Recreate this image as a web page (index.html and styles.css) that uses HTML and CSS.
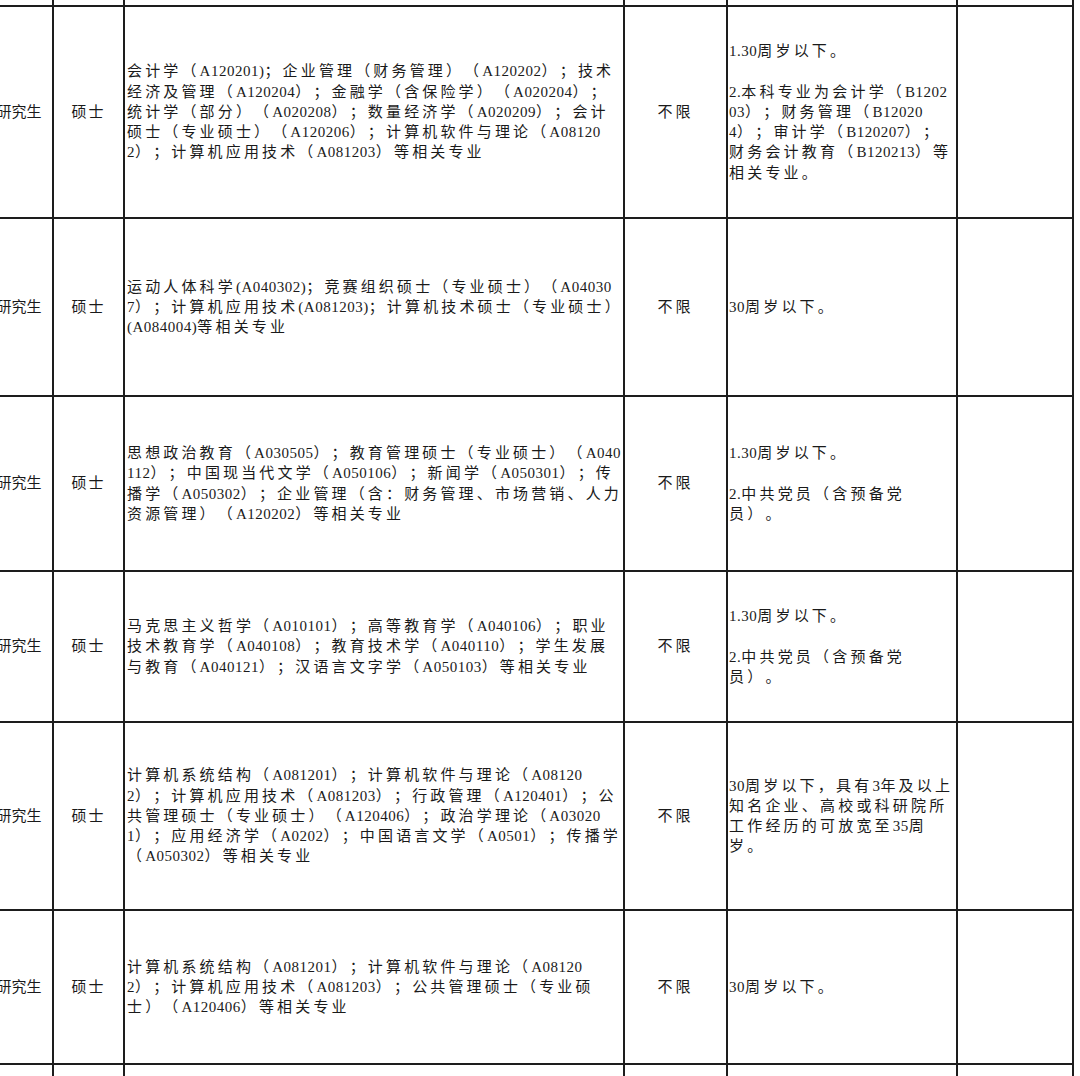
FILE: index.html
```html
<!DOCTYPE html>
<html lang="zh-CN">
<head>
<meta charset="utf-8">
<title>岗位表</title>
<link rel="stylesheet" href="styles.css">
</head>
<body>
<div class="sheet">
  <div class="grid">
    <div class="cell"></div><div class="cell"></div><div class="cell"></div><div class="cell"></div><div class="cell"></div><div class="cell"></div>

    <div class="cell c-edu">研究生</div>
    <div class="cell c-deg">硕士</div>
    <div class="cell c-major"><div>会计学（<span class="en">A120201)</span>；企业管理（财务管理）（<span class="en">A120202</span>）；技术<br>经济及管理（<span class="en">A120204</span>）；金融学（含保险学）（<span class="en">A020204</span>）；<br>统计学（部分）（<span class="en">A020208</span>）；数量经济学（<span class="en">A020209</span>）；会计<br>硕士（专业硕士）（<span class="en">A120206</span>）；计算机软件与理论（<span class="en">A08120</span><br><span class="en">2</span>）；计算机应用技术（<span class="en">A081203</span>）等相关专业</div></div>
    <div class="cell c-lim">不限</div>
    <div class="cell c-note"><div><p><span class="en">1.30</span>周岁以下。</p><p><span class="en">2.</span>本科专业为会计学（<span class="en">B1202</span><br><span class="en">03</span>）；财务管理（<span class="en">B12020</span><br><span class="en">4</span>）；审计学（<span class="en">B120207</span>）；<br>财务会计教育（<span class="en">B120213</span>）等<br>相关专业。</p></div></div>
    <div class="cell"></div>

    <div class="cell c-edu">研究生</div>
    <div class="cell c-deg">硕士</div>
    <div class="cell c-major"><div>运动人体科学<span class="en">(A040302)</span>；竞赛组织硕士（专业硕士）（<span class="en">A04030</span><br><span class="en">7</span>）；计算机应用技术<span class="en">(A081203)</span>；计算机技术硕士（专业硕士）<br><span class="en">(A084004)</span>等相关专业</div></div>
    <div class="cell c-lim">不限</div>
    <div class="cell c-note"><div><p><span class="en">30</span>周岁以下。</p></div></div>
    <div class="cell"></div>

    <div class="cell c-edu">研究生</div>
    <div class="cell c-deg">硕士</div>
    <div class="cell c-major"><div>思想政治教育（<span class="en">A030505</span>）；教育管理硕士（专业硕士）（<span class="en">A040</span><br><span class="en">112</span>）；中国现当代文学（<span class="en">A050106</span>）；新闻学（<span class="en">A050301</span>）；传<br>播学（<span class="en">A050302</span>）；企业管理（含：财务管理、市场营销、人力<br>资源管理）（<span class="en">A120202</span>）等相关专业</div></div>
    <div class="cell c-lim">不限</div>
    <div class="cell c-note"><div><p><span class="en">1.30</span>周岁以下。</p><p><span class="en">2.</span>中共党员（含预备党<br>员）。</p></div></div>
    <div class="cell"></div>

    <div class="cell c-edu">研究生</div>
    <div class="cell c-deg">硕士</div>
    <div class="cell c-major"><div>马克思主义哲学（<span class="en">A010101</span>）；高等教育学（<span class="en">A040106</span>）；职业<br>技术教育学（<span class="en">A040108</span>）；教育技术学（<span class="en">A040110</span>）；学生发展<br>与教育（<span class="en">A040121</span>）；汉语言文字学（<span class="en">A050103</span>）等相关专业</div></div>
    <div class="cell c-lim">不限</div>
    <div class="cell c-note"><div><p><span class="en">1.30</span>周岁以下。</p><p><span class="en">2.</span>中共党员（含预备党<br>员）。</p></div></div>
    <div class="cell"></div>

    <div class="cell c-edu">研究生</div>
    <div class="cell c-deg">硕士</div>
    <div class="cell c-major"><div>计算机系统结构（<span class="en">A081201</span>）；计算机软件与理论（<span class="en">A08120</span><br><span class="en">2</span>）；计算机应用技术（<span class="en">A081203</span>）；行政管理（<span class="en">A120401</span>）；公<br>共管理硕士（专业硕士）（<span class="en">A120406</span>）；政治学理论（<span class="en">A03020</span><br><span class="en">1</span>）；应用经济学（<span class="en">A0202</span>）；中国语言文学（<span class="en">A0501</span>）；传播学<br>（<span class="en">A050302</span>）等相关专业</div></div>
    <div class="cell c-lim">不限</div>
    <div class="cell c-note"><div><p><span class="en">30</span>周岁以下，具有<span class="en">3</span>年及以上<br>知名企业、高校或科研院所<br>工作经历的可放宽至<span class="en">35</span>周<br>岁。</p></div></div>
    <div class="cell"></div>

    <div class="cell c-edu">研究生</div>
    <div class="cell c-deg">硕士</div>
    <div class="cell c-major"><div>计算机系统结构（<span class="en">A081201</span>）；计算机软件与理论（<span class="en">A08120</span><br><span class="en">2</span>）；计算机应用技术（<span class="en">A081203</span>）；公共管理硕士（专业硕<br>士）（<span class="en">A120406</span>）等相关专业</div></div>
    <div class="cell c-lim">不限</div>
    <div class="cell c-note"><div><p><span class="en">30</span>周岁以下。</p></div></div>
    <div class="cell"></div>

    <div class="cell"></div><div class="cell"></div><div class="cell"></div><div class="cell"></div><div class="cell"></div><div class="cell"></div>
  </div>
</div>
</body>
</html>
```

FILE: styles.css
```css
html, body {
  margin: 0;
  padding: 0;
  background: #ffffff;
}

.sheet {
  width: 1080px;
  height: 1076px;
  overflow: hidden;
  background: #ffffff;
}

.grid {
  display: grid;
  grid-template-columns: 66px 69px 498px 101px 228px 114px;
  grid-template-rows: 5px 210px 176px 173px 149px 186px 152px 40px;
  gap: 2px;
  padding-right: 2px;
  width: max-content;
  margin-left: -14px;
  background: #1d1d1d;
  font-family: "Liberation Serif", "Noto Sans CJK SC", serif;
  font-size: 15px;
  color: #1a1a1a;
  text-spacing-trim: space-all;
}

.cell {
  background: #ffffff;
  display: flex;
  align-items: center;
  line-height: 20.25px;
  white-space: nowrap;
  overflow: hidden;
}

.c-edu {
  justify-content: center;
  letter-spacing: 0;
}

.c-deg {
  justify-content: center;
  letter-spacing: 2px;
}

.c-lim {
  justify-content: center;
  letter-spacing: 3px;
}

.c-major {
  padding-left: 2px;
  letter-spacing: 3.15px;
}

.c-note {
  padding-left: 1px;
  letter-spacing: 3.2px;
}

.c-note p {
  margin: 0;
}

.c-note p + p {
  margin-top: 20.25px;
}

.en {
  letter-spacing: 0.5px;
}
```
